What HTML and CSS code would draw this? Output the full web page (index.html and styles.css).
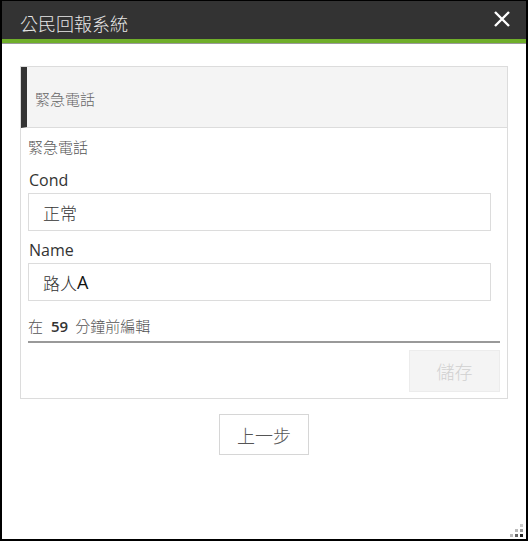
FILE: index.html
```html
<!DOCTYPE html>
<html lang="zh-Hant">
<head>
<meta charset="utf-8">
<title>公民回報系統</title>
<link rel="stylesheet" href="styles.css">
</head>
<body>
<div class="window">
  <div class="titlebar">
    <span class="title">公民回報系統</span>
    <svg class="close" width="18" height="18" viewBox="0 0 18 18"><path d="M2 2 L16 16 M16 2 L2 16" stroke="#fff" stroke-width="2.4" fill="none"/></svg>
  </div>
  <div class="accent"></div>
  <div class="content">
    <div class="card">
      <div class="card-head"><span>緊急電話</span></div>
      <div class="card-body">
        <div class="desc">緊急電話</div>
        <div class="label">Cond</div>
        <div class="field">正常</div>
        <div class="label label-2">Name</div>
        <div class="field">路人<span class="latin">A</span></div>
        <div class="edited">在<b>59</b>分鐘前編輯</div>
        <div class="rule"></div>
        <div class="actions"><button class="save">儲存</button></div>
      </div>
    </div>
    <div class="nav"><button class="back">上一步</button></div>
  </div>
  <svg class="grip" width="14" height="14" viewBox="0 0 14 14">
    <rect x="10" y="0" width="3" height="3" fill="#ccc"/>
    <rect x="5" y="5" width="3" height="3" fill="#bbb"/>
    <rect x="10" y="5" width="3" height="3" fill="#999"/>
    <rect x="0" y="10" width="3" height="3" fill="#bbb"/>
    <rect x="5" y="10" width="3" height="3" fill="#666"/>
    <rect x="10" y="10" width="3" height="3" fill="#222"/>
  </svg>
</div>
</body>
</html>
```
FILE: styles.css
```css
html, body {
  margin: 0;
  padding: 0;
  background: #fff;
}
body {
  font-family: "Open Sans", "Noto Sans CJK TC", sans-serif;
}
.window {
  position: relative;
  box-sizing: border-box;
  width: 528px;
  height: 541px;
  border: 2px solid #000;
  border-top-width: 1px;
  background: #fff;
}
.titlebar {
  height: 38px;
  background: #333;
  display: flex;
  align-items: center;
  justify-content: space-between;
  padding: 0 15px 0 18px;
}
.title {
  color: #e6e6e6;
  font-size: 18px;
  font-weight: 300;
  font-family: "Noto Sans CJK TC", sans-serif;
  margin-top: 6px;
}
.close {
  display: block;
  margin-top: -2px;
}
.accent {
  height: 4px;
  background: #6fae2a;
  border-bottom: 1px solid #9a9a9a;
}
.content {
  padding: 22px 18px 0 18px;
}
.card {
  border: 1px solid #dcdcdc;
}
.card-head {
  height: 60px;
  background: #f4f4f4;
  border-left: 6px solid #333;
  border-bottom: 1px solid #dcdcdc;
  display: flex;
  align-items: center;
  padding-left: 8px;
  color: #666;
  font-size: 15px;
  font-weight: 300;
  font-family: "Noto Sans CJK TC", sans-serif;
}
.card-head span {
  margin-top: 2px;
}
.card-body {
  padding: 9px 7px 6px 7px;
}
.desc {
  font-size: 15px;
  line-height: 20px;
  color: #555;
  font-weight: 300;
  font-family: "Noto Sans CJK TC", sans-serif;
}
.label {
  margin-top: 12px;
  font-size: 16px;
  line-height: 22px;
  color: #333;
  padding-left: 1px;
}
.label-2 {
  margin-top: 8px;
}
.field {
  margin-top: 2px;
  margin-right: 9px;
  box-sizing: border-box;
  height: 38px;
  border: 1px solid #dcdcdc;
  display: flex;
  align-items: center;
  padding-left: 14px;
  font-size: 17px;
  font-weight: 300;
  color: #333;
  font-family: "Noto Sans CJK TC", sans-serif;
}
.field .latin {
  font-family: "Open Sans", sans-serif;
  font-weight: 400;
  color: #111;
  font-size: 18px;
}
.edited {
  margin-top: 15px;
  font-size: 15px;
  line-height: 20px;
  color: #555;
  font-weight: 300;
  font-family: "Noto Sans CJK TC", sans-serif;
}
.edited b {
  font-family: "Open Sans", sans-serif;
  font-weight: 600;
  font-size: 15px;
  color: #333;
  margin: 0 7px 0 8px;
}
.rule {
  margin-top: 5px;
  height: 2px;
  background: #999;
}
.actions {
  margin-top: 7px;
  display: flex;
  justify-content: flex-end;
}
.save {
  width: 91px;
  height: 42px;
  background: #f4f4f4;
  border: 1px solid #ececec;
  color: #d0d0d0;
  font-size: 18px;
  font-weight: 300;
  font-family: "Noto Sans CJK TC", sans-serif;
  padding: 0;
}
.nav {
  margin-top: 15px;
  display: flex;
  justify-content: center;
}
.back {
  width: 90px;
  height: 41px;
  background: #fff;
  border: 1px solid #d6d6d6;
  color: #555;
  font-size: 18px;
  font-weight: 300;
  font-family: "Noto Sans CJK TC", sans-serif;
  padding: 0;
}
.grip {
  position: absolute;
  right: 2px;
  bottom: 1px;
}
```
